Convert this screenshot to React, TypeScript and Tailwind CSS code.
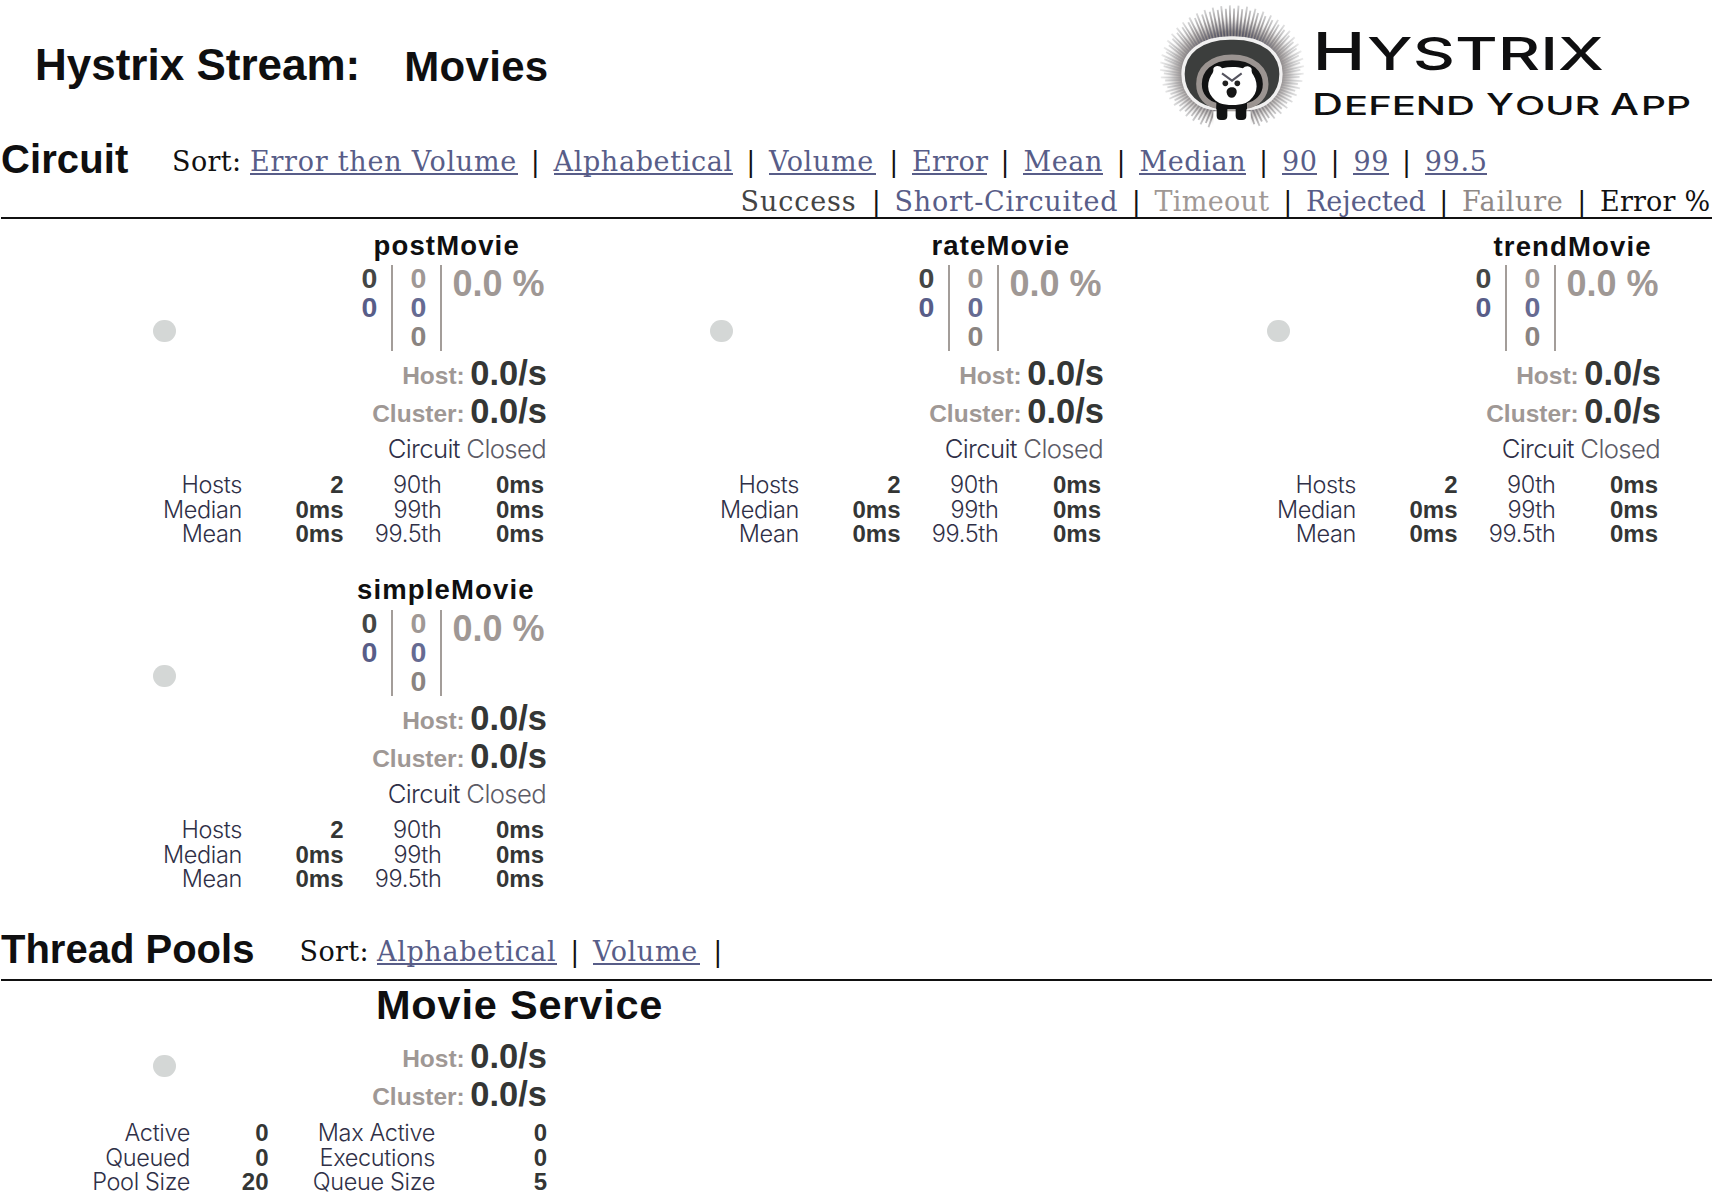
import React from "react";

const SANS = "font-['Liberation_Sans',Arial,sans-serif]";
const SERIF = "font-['DejaVu_Serif',serif] text-[27px] tracking-[0.65px]";
const LIGHT = "font-['Inter',sans-serif] font-[280]";

type Item = { text: string; cls: string };

const circuitSorts: Item[] = [
  { text: "Error then Volume", cls: "w-[267.5px] tracking-[0.75px]" },
  { text: "Alphabetical", cls: "w-[179.5px]" },
  { text: "Volume", cls: "w-[107px]" },
  { text: "Error", cls: "w-[75.4px] tracking-[0.3px]" },
  { text: "Mean", cls: "w-[80px]" },
  { text: "Median", cls: "w-[106.6px]" },
  { text: "90", cls: "w-[35.4px]" },
  { text: "99", cls: "w-[35.4px]" },
  { text: "99.5", cls: "w-[62.4px]" },
];

const legend: Item[] = [
  { text: "Success", cls: "w-[118px] tracking-[0.9px] text-[#444444]" },
  { text: "Short-Circuited", cls: "w-[224px] tracking-[0.75px] text-[#585d88]" },
  { text: "Timeout", cls: "w-[115.5px] tracking-[0.3px] text-[#9f9895]" },
  { text: "Rejected", cls: "w-[120px] tracking-[0px] text-[#585d88]" },
  { text: "Failure", cls: "w-[102px] tracking-[0.7px] text-[#8f8986]" },
  { text: "Error %", cls: "w-[111px] tracking-[0.2px] text-[#111]" },
];

const circuits: Item[] = [
  { text: "postMovie", cls: "pl-[26.5px] pt-[8.5px]" },
  { text: "rateMovie", cls: "pl-[27.5px] pt-[8.5px]" },
  { text: "trendMovie", cls: "pl-[32.5px] pt-[9.5px]" },
  { text: "simpleMovie", cls: "pl-[10px] pt-[7.5px]" },
];

function Bar() {
  return <span className="w-[36px] shrink-0 text-center text-[#111]">|</span>;
}

function SortLink({ text, cls }: Item) {
  return (
    <a
      className={`${cls} relative shrink-0 whitespace-nowrap text-[#585d88] after:absolute after:inset-x-0 after:top-[36px] after:h-[2.4px] after:bg-[#585d88]`}
    >
      {text}
    </a>
  );
}

function Dot() {
  return <div className="h-[22.5px] w-[22.5px] rounded-full bg-[#d4d7d6]" />;
}

function Rate({ label }: { label: string }) {
  return (
    <div className="flex h-[38px] w-[200px] justify-end gap-[5.5px] font-bold">
      <span className="text-[24.5px] leading-[43px] text-[#9f9895]">{label}:</span>
      <span className="text-[34.5px] leading-[38px] text-[#343635]">0.0/s</span>
    </div>
  );
}

function Rows({ rows, cols }: { rows: string[][]; cols: string }) {
  return (
    <div className={`grid ${cols} text-right leading-[24.5px]`}>
      {rows.flat().map((t, i) =>
        i % 2 === 0 ? (
          <span key={i} className={`${LIGHT} whitespace-nowrap text-[23.5px] tracking-[-0.35px] text-[#2f3047]`}>
            {t}
          </span>
        ) : (
          <span key={i} className="text-[24px] font-bold text-[#343635]">
            {t}
          </span>
        ),
      )}
    </div>
  );
}

function CircuitCard({ text, cls }: Item) {
  return (
    <article className="h-[345px] w-[557px]">
      <div className="flex">
        <div className="w-[347px] shrink-0 pl-[153.3px] pt-[100.5px]">
          <Dot />
        </div>
        <div>
          <h3 className={`${cls} h-[46px] whitespace-nowrap text-[27.5px] font-bold leading-[36px] tracking-[1.15px] text-[#0f0f10]`}>
            {text}
          </h3>
          <div className="flex h-[86px] font-bold">
            <div className="w-[46px] border-r-2 border-[#a39d99] pl-px text-center text-[28.5px] leading-[29px]">
              <div className="-mt-px text-[#444645]">0</div>
              <div className="text-[#585d88]">0</div>
            </div>
            <div className="w-[49px] border-r-2 border-[#a39d99] pl-[4px] text-center text-[28.5px] leading-[29px]">
              <div className="-mt-px text-[#9f9895]">0</div>
              <div className="text-[#666b92]">0</div>
              <div className="text-[#8a8481]">0</div>
            </div>
            <div className="whitespace-nowrap pl-[10.5px] text-[36px] leading-[37px] text-[#9f9895]">0.0 %</div>
          </div>
          <div className="pt-[3px]">
            <Rate label="Host" />
            <Rate label="Cluster" />
          </div>
        </div>
      </div>
      <div className={`${LIGHT} w-[546px] text-right text-[25.7px] leading-[37px] tracking-[-0.65px] text-[#2f3047]`}>
        Circuit <span className="text-[#5c5b66]">Closed</span>
      </div>
      <div className="pt-[6px]">
        <Rows
          cols="grid-cols-[242px_101.5px_98px_102.5px]"
          rows={[
            ["Hosts", "2", "90th", "0ms"],
            ["Median", "0ms", "99th", "0ms"],
            ["Mean", "0ms", "99.5th", "0ms"],
          ]}
        />
      </div>
    </article>
  );
}

const spikes = Array.from({ length: 104 }, (_, i) => {
  const a = ((i + 0.5) / 104) * Math.PI * 2;
  const c = Math.cos(a);
  const s = Math.sin(a);
  const outer = i % 2 ? 1 : 0.95;
  const tx = 246 + c * 216 * outer;
  const ty = 204 + s * 188 * outer;
  return { skip: ty > 330 && tx > 186 && tx < 306, d: `M${246 + c * 146} ${218 + s * 104}L${tx} ${ty}` };
});

function Logo() {
  return (
    <svg className="ml-auto block h-[134px] w-[563px] shrink-0" viewBox="1150 0 563 134">
      <defs>
        <radialGradient id="quill" gradientUnits="userSpaceOnUse" cx="246" cy="210" r="218">
          <stop offset="0.5" stopColor="#5a5968" />
          <stop offset="0.7" stopColor="#979394" />
          <stop offset="0.86" stopColor="#cacacb" />
          <stop offset="1" stopColor="#efefef" />
        </radialGradient>
        <radialGradient id="halo" cx="0.5" cy="0.5" r="0.5">
          <stop offset="0.7" stopColor="#8d8784" stopOpacity="0.95" />
          <stop offset="0.82" stopColor="#aaa5a3" stopOpacity="0.6" />
          <stop offset="1" stopColor="#ffffff" stopOpacity="0" />
        </radialGradient>
      </defs>
      <g transform="translate(1150 0) scale(0.33333)">
        <ellipse cx="246" cy="214" rx="212" ry="172" fill="url(#halo)" />
        {spikes.map((s, i) => (s.skip ? null : <path key={i} d={s.d} stroke="url(#quill)" strokeWidth="5.5" />))}
        <path d="M190 334H302V390H190Z" fill="#fff" />
        <path
          d="M246 114C340 112 393 160 393 222C393 285 345 326 290 326H202C147 326 99 285 99 222C99 160 152 112 246 114Z"
          fill="#3c3e3d"
          stroke="#f1f0f0"
          strokeWidth="10"
        />
        <path
          d="M246 172C312 172 347 210 347 252C347 290 320 312 290 318H202C172 312 147 290 147 252C147 210 180 172 246 172Z"
          fill="#111213"
          stroke="#9b9491"
          strokeWidth="17"
        />
        <rect x="199" y="300" width="92" height="28" fill="#111213" />
        <rect x="200" y="308" width="32" height="52" rx="12" fill="#111213" />
        <rect x="257" y="308" width="32" height="52" rx="12" fill="#111213" />
        <path
          d="M190 206C194 195 210 196 216 205C236 200 260 200 279 205C285 196 301 196 305 207C304 214 306 220 310 225C328 255 322 290 287 309C262 317 232 317 208 309C173 290 166 255 184 225C189 219 191 213 190 206Z"
          fill="#fff"
        />
        <path d="M216 220L246 242L275 220" fill="none" stroke="#55545f" strokeWidth="6" />
        <circle cx="226" cy="250" r="8.5" fill="#222" />
        <circle cx="262" cy="250" r="8.5" fill="#222" />
        <path d="M246 262C258 262 261 270 260 278C258 287 252 293 245 293C238 293 231 287 230 278C229 270 234 262 246 262Z" fill="#151515" />
      </g>
      <g fill="#0f0f10" fontFamily="Inter, sans-serif" fontWeight="550">
        <text x="1312.5" y="70" fontSize="52" textLength="53" lengthAdjust="spacingAndGlyphs">H</text>
        <text x="1367" y="70" fontSize="44.5" textLength="237" lengthAdjust="spacingAndGlyphs">YSTRIX</text>
        <text x="1312" y="115" fontSize="29.5" textLength="31" lengthAdjust="spacingAndGlyphs">D</text>
        <text x="1344" y="115" fontSize="25.5" textLength="131" lengthAdjust="spacingAndGlyphs">EFEND</text>
        <text x="1486" y="115" fontSize="29.5" textLength="28" lengthAdjust="spacingAndGlyphs">Y</text>
        <text x="1515" y="115" fontSize="25.5" textLength="85" lengthAdjust="spacingAndGlyphs">OUR</text>
        <text x="1610" y="115" fontSize="29.5" textLength="29" lengthAdjust="spacingAndGlyphs">A</text>
        <text x="1641" y="115" fontSize="25.5" textLength="50" lengthAdjust="spacingAndGlyphs">PP</text>
      </g>
    </svg>
  );
}

export default function App() {
  return (
    <div className={`${SANS} flex h-[1193px] w-[1713px] flex-col overflow-hidden bg-white`}>
      <header className="flex h-[134px] shrink-0 items-start font-bold text-[#0f0f10]">
        <h1 className="whitespace-nowrap pl-[35px] pt-[43px] text-[44px] leading-[44px]">Hystrix Stream:</h1>
        <span className="pl-[44px] pt-[45px] text-[42px] leading-[44px] tracking-[0.3px]">Movies</span>
        <Logo />
      </header>

      <section className="shrink-0">
        <div className="mx-[1px] border-b-2 border-[#111]">
          <div className="flex h-[50px] leading-[50px]">
            <h2 className="w-[171px] shrink-0 text-[40px] font-bold tracking-[0.1px] text-[#0f0f10]">Circuit</h2>
            <nav className={`${SERIF} flex pt-[3px]`}>
              <span className="w-[78px] shrink-0 tracking-[0.4px] text-[#111]">Sort:</span>
              {circuitSorts.map((s, i) => (
                <React.Fragment key={s.text}>
                  {i > 0 && <Bar />}
                  <SortLink {...s} />
                </React.Fragment>
              ))}
            </nav>
          </div>
          <div className={`${SERIF} flex h-[33px] justify-end pr-px leading-[35px]`}>
            {legend.map((s, i) => (
              <React.Fragment key={s.text}>
                {i > 0 && <Bar />}
                <span className={`${s.cls} shrink-0 whitespace-nowrap`}>{s.text}</span>
              </React.Fragment>
            ))}
          </div>
        </div>
        <div className="grid grid-cols-[557px_557px_557px]">
          {circuits.map((c) => (
            <CircuitCard key={c.text} {...c} />
          ))}
        </div>
      </section>

      <section className="shrink-0 pt-[15px]">
        <div className="mx-[1px] flex h-[57px] border-b-2 border-[#111] leading-[50px]">
          <h2 className="w-[298.5px] shrink-0 text-[40px] font-bold text-[#0f0f10]">Thread Pools</h2>
          <nav className={`${SERIF} flex pt-[3px]`}>
            <span className="w-[77.5px] shrink-0 tracking-[0.4px] text-[#111]">Sort:</span>
            <SortLink text="Alphabetical" cls="w-[180px]" />
            <Bar />
            <SortLink text="Volume" cls="w-[107px]" />
            <Bar />
          </nav>
        </div>
        <div className="flex">
          <div className="w-[347px] shrink-0 pl-[153.3px] pt-[73.5px]">
            <Dot />
          </div>
          <div>
            <h3 className="h-[56px] whitespace-nowrap pl-[29px] text-[41.5px] font-bold leading-[48px] tracking-[0.8px] text-[#0f0f10]">
              Movie Service
            </h3>
            <Rate label="Host" />
            <Rate label="Cluster" />
          </div>
        </div>
        <div className="pt-[8px]">
          <Rows
            cols="grid-cols-[190px_78.5px_166.5px_112px]"
            rows={[
              ["Active", "0", "Max Active", "0"],
              ["Queued", "0", "Executions", "0"],
              ["Pool Size", "20", "Queue Size", "5"],
            ]}
          />
        </div>
      </section>
    </div>
  );
}
